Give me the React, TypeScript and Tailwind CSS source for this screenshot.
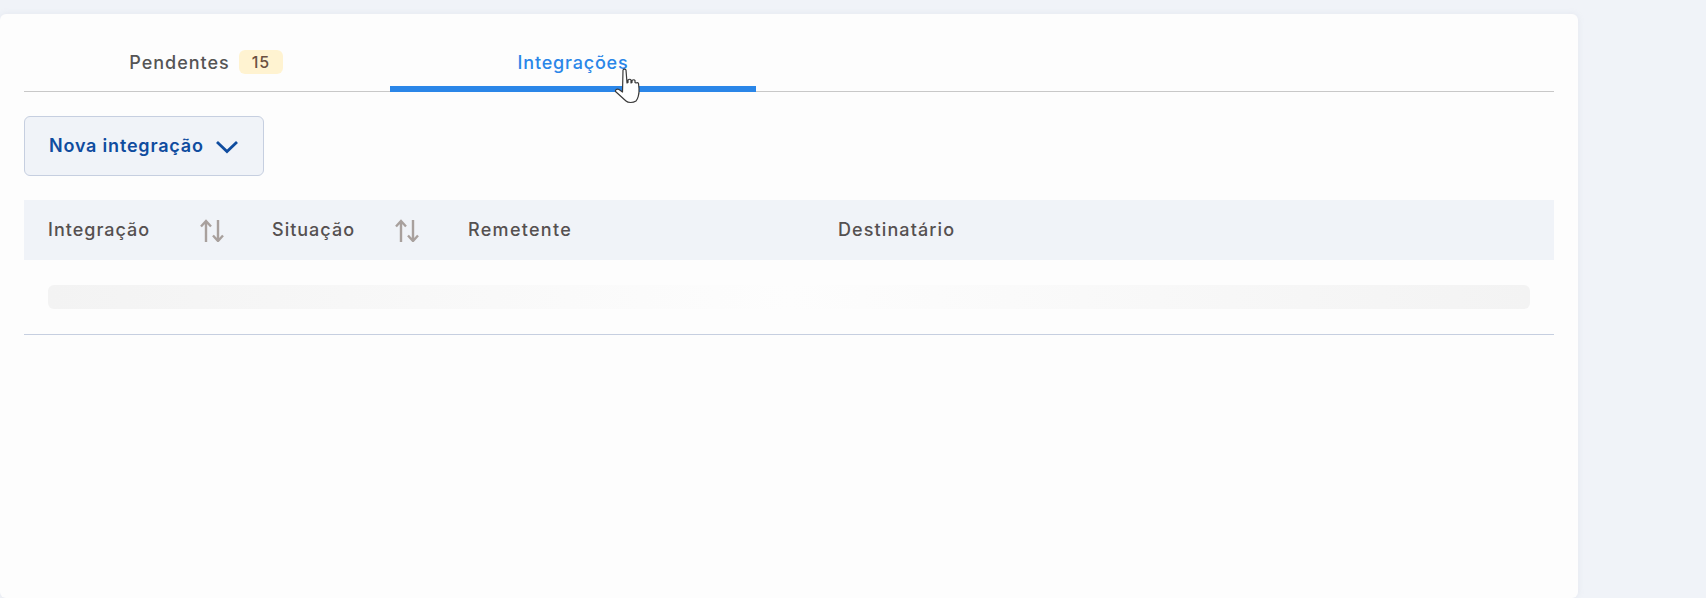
import React from "react";

function SortIcon() {
  return (
    <svg width="26" height="24" viewBox="0 0 26 24" fill="none" stroke="#a8a09d" strokeWidth="2.4">
      <path d="M6 24V3M1 8.500L6 3L11 8.500" />
      <path d="M18 2V23M13 17.500L18 23L23 17.500" />
    </svg>
  );
}

function Cursor() {
  return (
    <svg width="26" height="36" viewBox="0 0 26 36" fill="#fff" stroke="#3a3a3a" strokeWidth="1.2" strokeLinejoin="round" className="absolute left-[614px] top-[68px]">
      <path d="M9 2c1-1.500 2.500-1 3 0l1 13 1-.5V12c1-1 2.500-1 3 0v3l1-.5v-2c1-1 2.500-1 3 0v2l1 .5c1-.5 2-.5 2.500.500l.5 5c.5 6-1.500 11-3 12.500-3 2-8 2-10 0L1.500 23.500C1 22 3 20.500 5 21.500L8.500 24z" />
    </svg>
  );
}

export default function App() {
  return (
    <div className="relative h-[598px] overflow-hidden bg-[#f0f3f8] pt-[14px] font-['Inter',sans-serif]">
      <div className="h-[584px] w-[1578px] rounded-md bg-[#fdfdfd] px-6 shadow-[0_0_6px_rgba(160,170,190,0.15)]">
        <div className="flex h-[78px] border-b border-[#c8c8c8]">
          <div className="flex w-[366px] items-center justify-center gap-[9px] pr-[2px] pt-[19px]">
            <span className="text-[18px] font-medium tracking-[1px] text-[#555555]">Pendentes</span>
            <span className="flex h-6 w-11 items-center justify-center rounded-md bg-[#fff3d1] text-[16px] font-medium tracking-[0.8px] text-[#6b5040]">15</span>
          </div>
          <div className="-mb-px flex w-[366px] items-center justify-center border-b-[6px] border-[#2a86e8] pt-[24px]">
            <span className="text-[18px] font-medium tracking-[0.8px] text-[#2a86e8]">Integrações</span>
          </div>
        </div>

        <div className="mt-[24px] flex h-[60px] w-[240px] items-center gap-[12px] rounded-md border border-[#c6cfe0] bg-[#f0f3f8] pb-[1px] pl-6">
          <span className="whitespace-nowrap text-[18px] font-semibold tracking-[0.8px] text-[#0f4c9f]">Nova integração</span>
          <svg width="22" height="14" viewBox="0 0 22 14" fill="none" stroke="#0f4c9f" strokeWidth="2.800" className="mt-[3px] shrink-0">
            <path d="M1 2L11 11.500L21 2" />
          </svg>
        </div>

        <div className="mt-[24px] flex h-[60px] items-center bg-[#f0f3f8] text-[18px] font-medium tracking-[1px] text-[#555050]">
          <div className="flex w-[224px] items-center pl-6">
            <span className="w-[152px] pb-[2px]">Integração</span>
            <SortIcon />
          </div>
          <div className="flex w-[196px] items-center pl-6">
            <span className="w-[123px] pb-[2px]">Situação</span>
            <SortIcon />
          </div>
          <div className="w-[370px] pb-[2px] pl-6 tracking-[1.3px]">Remetente</div>
          <div className="flex-1 pb-[2px] pl-6 tracking-[1.1px]">Destinatário</div>
        </div>

        <div className="border-b border-[#c6cfe0] px-6 pb-[25px] pt-[25px]">
          <div className="h-6 rounded-md bg-gradient-to-r from-[#f3f3f3] via-[#fdfdfd] to-[#f3f3f3]" />
        </div>
      </div>
      <Cursor />
    </div>
  );
}
